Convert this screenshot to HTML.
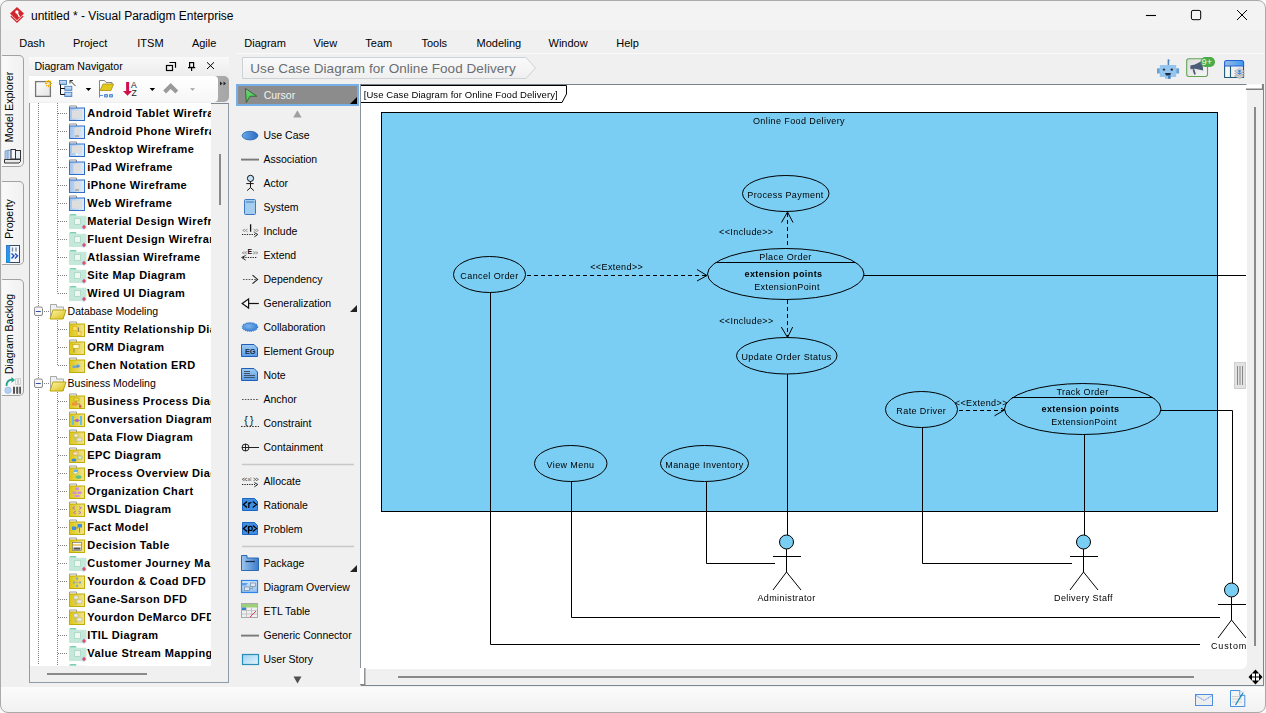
<!DOCTYPE html><html><head><meta charset="utf-8"><title>VP</title><style>
*{box-sizing:border-box}
html,body{margin:0;padding:0}
body{width:1266px;height:713px;overflow:hidden;position:relative;background:#f0f0f0;font-family:"Liberation Sans", sans-serif;color:#000}
.a{position:absolute}
.t{position:absolute;white-space:pre;line-height:1}
svg{position:absolute;overflow:visible}
</style></head><body><div class="a" style="left:0;top:0;width:1266px;height:30px;background:#f3f3f3"></div><svg style="left:0;top:0" width="40" height="30"><path d="M17 6.9 L24 13.6 L17 20.3 L10 13.6 Z" fill="#d3262c"/><path d="M10.4 16.6 L17 23 L23.6 16.6 L22.6 15.6 L17 21 L11.4 15.6 Z" fill="#d3262c"/><path d="M11 15.2 L17 21 L23 15.2" fill="none" stroke="#f6d0d0" stroke-width="0.6" stroke-dasharray="1 0.8"/><circle cx="16.9" cy="12" r="1.7" fill="#fff"/><path d="M17.2 12.8 L19.4 17" stroke="#fff" stroke-width="1.4"/></svg><div class="t" style="left:31.00px;top:10.04px;font-size:12px;color:#000;font-weight:normal;letter-spacing:0px;">untitled * - Visual Paradigm Enterprise</div><svg style="left:1130px;top:0" width="136" height="30"><path d="M15.9 15.5 H26" stroke="#000" stroke-width="1.1"/><rect x="61.4" y="10.4" width="9.3" height="9.3" rx="1.6" fill="none" stroke="#000" stroke-width="1"/><path d="M107 10 L117 20 M117 10 L107 20" stroke="#000" stroke-width="1"/></svg><div class="t" style="left:19.20px;top:38.49px;font-size:11px;color:#000;font-weight:normal;letter-spacing:0px;">Dash</div><div class="t" style="left:73.00px;top:38.49px;font-size:11px;color:#000;font-weight:normal;letter-spacing:0px;">Project</div><div class="t" style="left:137.30px;top:38.49px;font-size:11px;color:#000;font-weight:normal;letter-spacing:0px;">ITSM</div><div class="t" style="left:191.90px;top:38.49px;font-size:11px;color:#000;font-weight:normal;letter-spacing:0px;">Agile</div><div class="t" style="left:244.30px;top:38.49px;font-size:11px;color:#000;font-weight:normal;letter-spacing:0px;">Diagram</div><div class="t" style="left:313.50px;top:38.49px;font-size:11px;color:#000;font-weight:normal;letter-spacing:0px;">View</div><div class="t" style="left:365.30px;top:38.49px;font-size:11px;color:#000;font-weight:normal;letter-spacing:0px;">Team</div><div class="t" style="left:421.40px;top:38.49px;font-size:11px;color:#000;font-weight:normal;letter-spacing:0px;">Tools</div><div class="t" style="left:476.50px;top:38.49px;font-size:11px;color:#000;font-weight:normal;letter-spacing:0px;">Modeling</div><div class="t" style="left:548.50px;top:38.49px;font-size:11px;color:#000;font-weight:normal;letter-spacing:0px;">Window</div><div class="t" style="left:616.30px;top:38.49px;font-size:11px;color:#000;font-weight:normal;letter-spacing:0px;">Help</div><div class="a" style="left:2px;top:55px;width:22px;height:112px;border:1px solid #a2a2a2;border-left:none;border-radius:0 5px 5px 0;background:linear-gradient(90deg,#f9f9f9,#f1f1f1)"></div><div class="t" style="left:9.1px;top:107.0px;font-size:10.5px;transform:translate(-50%,-50%) rotate(-90deg);color:#000">Model Explorer</div><div class="a" style="left:2px;top:181px;width:22px;height:84px;border:1px solid #a2a2a2;border-left:none;border-radius:0 5px 5px 0;background:linear-gradient(90deg,#f9f9f9,#f1f1f1)"></div><div class="t" style="left:9.1px;top:218.5px;font-size:10.5px;transform:translate(-50%,-50%) rotate(-90deg);color:#000">Property</div><div class="a" style="left:2px;top:279px;width:22px;height:117px;border:1px solid #a2a2a2;border-left:none;border-radius:0 5px 5px 0;background:linear-gradient(90deg,#f9f9f9,#f1f1f1)"></div><div class="t" style="left:9.1px;top:333.5px;font-size:10.5px;transform:translate(-50%,-50%) rotate(-90deg);color:#000">Diagram Backlog</div><svg style="left:0;top:0" width="28" height="400"><defs><linearGradient id="pb" x1="0" y1="0" x2="0" y2="1"><stop offset="0" stop-color="#3a8ae6"/><stop offset="1" stop-color="#18a0f8"/></linearGradient></defs><path d="M5 151 l4 -1 v9 l-4 1z" fill="#a8c8ee" stroke="#6a8ab8" stroke-width="0.7"/><path d="M8 150.5 l3.5 -0.5 v9.5 h-3.5z" fill="#c8dcf4" stroke="#6a8ab8" stroke-width="0.7"/><rect x="11" y="149.5" width="4.5" height="9.5" fill="#f4f8fc" stroke="#333" stroke-width="1"/><rect x="15.5" y="150.5" width="5" height="8.5" fill="#e6eef6" stroke="#333" stroke-width="1"/><path d="M4.5 159.5 h16 v2 l-1.5 1.5 h-14.5z" fill="#e8e8e8" stroke="#333" stroke-width="1"/><rect x="6.5" y="245.5" width="13" height="17" fill="#f4f7fb" stroke="#3a4a66" stroke-width="1"/><rect x="6.2" y="245.2" width="4" height="17.6" rx="1" fill="url(#pb)"/><path d="M12.5 247.5 v4 M16 247.5 v4" stroke="#7a8aa0" stroke-width="1.4"/><path d="M11.5 253.5 l2.5 2.2 -2.5 2.8 M15 253.5 l2.5 2.2 -2.5 2.8" stroke="#1c50c8" stroke-width="1.4" fill="none"/><path d="M6.5 386 q0 -6 5.5 -6.5" stroke="#24a48c" stroke-width="1.8" fill="none"/><path d="M11.5 377 l3.5 3 -3.5 2.8z" fill="#24a48c"/><circle cx="8" cy="390.3" r="3.2" fill="#b4d0f0" stroke="#8ab0e0" stroke-width="0.6"/><path d="M13 386.8 h2 v7 h-2z M16.2 386.8 h2 v7 h-2z M19.2 386.8 h1.8 v7 h-1.8z" fill="#555"/><path d="M15.5 378.5 h2 v6 h-2z M18.5 378.5 h2 v6 h-2z" fill="none" stroke="#c8c8c8" stroke-width="0.8"/></svg><div class="a" style="left:29px;top:57px;width:200px;height:19px;background:linear-gradient(#f9f9f9,#ececec)"></div><div class="t" style="left:34.40px;top:61.03px;font-size:10.6px;color:#000;font-weight:normal;letter-spacing:0px;">Diagram Navigator</div><svg style="left:160px;top:56px" width="70" height="20"><rect x="6.5" y="9.5" width="6" height="5" fill="none" stroke="#000" stroke-width="1.2"/><path d="M9.5 6.5 H15.5 V11.8" fill="none" stroke="#000" stroke-width="1.2"/><rect x="29.6" y="6.6" width="4" height="4.8" fill="none" stroke="#000" stroke-width="1.2"/><path d="M28 11.6 H35.2 M31.6 11.6 V15" fill="none" stroke="#000" stroke-width="1.2"/><path d="M47 6.3 L54 13 M54 6.3 L47 13" stroke="#000" stroke-width="1"/></svg><div class="a" style="left:205px;top:76px;width:24px;height:26px;background:linear-gradient(90deg,#b0b0b0,#a6a6a6);border-radius:0 5px 5px 0"></div><div class="a" style="left:29px;top:76px;width:189px;height:26px;background:linear-gradient(#ffffff,#f6f6f6);border-radius:0 4px 4px 0"></div><svg style="left:0;top:0" width="232" height="110"><defs><linearGradient id="tbw" x1="0" y1="0" x2="1" y2="1"><stop offset="0" stop-color="#fff"/><stop offset="1" stop-color="#e2e2e2"/></linearGradient><linearGradient id="tbb" x1="0" y1="0" x2="0" y2="1"><stop offset="0" stop-color="#d8e8f8"/><stop offset="1" stop-color="#8dbbe8"/></linearGradient></defs><rect x="35.6" y="81.6" width="14.8" height="14.8" fill="url(#tbw)" stroke="#777" stroke-width="1.3"/><path d="M48.5 80 v2.2 M48.5 84.8 v2.4 M45 83.5 h2.2 M49.8 83.5 h2.4 M46 81 l1.2 1.2 M51 81 l-1.2 1.2 M46 86 l1.2 -1.2 M51 86 l-1.2 -1.2" stroke="#f0b400" stroke-width="1.2"/><rect x="59.5" y="80.5" width="7" height="4" fill="url(#tbb)" stroke="#4a7fc0" stroke-width="0.9"/><rect x="64.8" y="86.3" width="7" height="4" fill="url(#tbb)" stroke="#4a7fc0" stroke-width="0.9"/><rect x="64.8" y="92.3" width="7" height="4.2" fill="url(#tbb)" stroke="#4a7fc0" stroke-width="0.9"/><path d="M60.5 84.5 v10 h4.3 M60.5 88.5 h4.3" stroke="#111" stroke-width="1" fill="none"/><path d="M70 80.5 l5.5 5.5 M70 80.5 h3 M70 80.5 v3" stroke="#222" stroke-width="0.9" fill="none"/><path d="M85.7 88 h5.5 l-2.75 3z" fill="#000"/><path d="M99.5 97.5 V80.5 h5 l1.5 2 h6 v3" fill="none" stroke="#777" stroke-width="0.9"/><path d="M103 84 h10.5 l-2.5 6.5 h-11z" fill="#e0c81c" stroke="#a89010" stroke-width="0.8"/><path d="M100 95.5 h3 M104.5 94.5 h3 v2.5 h-3z M109.5 94.5 h3 v2.5 h-3z" stroke="#4a86d0" stroke-width="0.9" fill="#8fbbe6"/><path d="M127.6 82 v9.5" stroke="#d00e4e" stroke-width="3"/><path d="M123 91 h9 l-4.5 4.7z" fill="#d00e4e"/><text x="131" y="88" font-size="8.6" font-family="Liberation Sans" fill="#222">A</text><text x="131.6" y="95.7" font-size="8.6" font-family="Liberation Sans" fill="#222">Z</text><path d="M149.6 88 h5.5 l-2.75 3z" fill="#000"/><path d="M163.2 90.6 L170.7 83.1 L178.2 90.6 L175.4 93.6 L170.7 88.9 L166 93.6 Z" fill="#9a9a9a"/><path d="M190 88.3 h5 l-2.5 2.4z" fill="#a0a0a0"/><path d="M220 81.5 l2.5 2 -2.5 2z M223.5 81.5 l2.5 2 -2.5 2z" fill="#222"/></svg><div class="a" style="left:29px;top:102.6px;width:200px;height:580.4px;border:1px solid #8f9aa6;border-top:1px solid #7f8790;background:#f0f0f0"></div><div class="a" style="left:30px;top:103px;width:181px;height:563px;background:#fff;overflow:hidden" id="tree"><svg style="left:0;top:0" width="181" height="563"><defs><linearGradient id="fb" x1="0" y1="0" x2="1" y2="0"><stop offset="0" stop-color="#a2c4ee"/><stop offset="1" stop-color="#e4eefa"/></linearGradient><linearGradient id="fy" x1="0" y1="0" x2="1" y2="1"><stop offset="0" stop-color="#fff5b0"/><stop offset="1" stop-color="#d8c010"/></linearGradient><linearGradient id="fyb" x1="0" y1="0" x2="1" y2="0"><stop offset="0" stop-color="#dcc60e"/><stop offset="1" stop-color="#f0e494"/></linearGradient></defs><path d="M8.5 0 V562" stroke="#808080" stroke-width="1" stroke-dasharray="1 1"/><path d="M27.5 0 V190.5" stroke="#808080" stroke-width="1" stroke-dasharray="1 1"/><path d="M27.5 217 V262.5" stroke="#808080" stroke-width="1" stroke-dasharray="1 1"/><path d="M27.5 289 V562" stroke="#808080" stroke-width="1" stroke-dasharray="1 1"/><path d="M28 10.5 H37" stroke="#808080" stroke-width="1" stroke-dasharray="1 1"/><path d="M39.5 5.0 v-2 h7 v2" fill="none" stroke="#8a8a8a" stroke-width="1"/><rect x="39.5" y="5.0" width="15" height="12.5" fill="url(#fb)" stroke="#2f6fc4" stroke-width="1"/><rect x="42" y="7.5" width="10" height="8" fill="#dedede"/><path d="M28 28.5 H37" stroke="#808080" stroke-width="1" stroke-dasharray="1 1"/><path d="M39.5 23.0 v-2 h7 v2" fill="none" stroke="#8a8a8a" stroke-width="1"/><rect x="39.5" y="23.0" width="15" height="12.5" fill="url(#fb)" stroke="#2f6fc4" stroke-width="1"/><rect x="44.5" y="25.0" width="5" height="9" fill="#dedede"/><path d="M45 33.0 h4" stroke="#777" stroke-width="0.8"/><path d="M28 46.5 H37" stroke="#808080" stroke-width="1" stroke-dasharray="1 1"/><path d="M39.5 41.0 v-2 h7 v2" fill="none" stroke="#8a8a8a" stroke-width="1"/><rect x="39.5" y="41.0" width="15" height="12.5" fill="url(#fb)" stroke="#2f6fc4" stroke-width="1"/><rect x="42" y="43.0" width="10" height="7" fill="#dedede"/><rect x="46" y="50.5" width="2" height="1.5" fill="#fff"/><path d="M28 64.5 H37" stroke="#808080" stroke-width="1" stroke-dasharray="1 1"/><path d="M39.5 59.0 v-2 h7 v2" fill="none" stroke="#8a8a8a" stroke-width="1"/><rect x="39.5" y="59.0" width="15" height="12.5" fill="url(#fb)" stroke="#2f6fc4" stroke-width="1"/><rect x="43.5" y="61.0" width="7" height="9" fill="#dedede"/><path d="M28 82.5 H37" stroke="#808080" stroke-width="1" stroke-dasharray="1 1"/><path d="M39.5 77.0 v-2 h7 v2" fill="none" stroke="#8a8a8a" stroke-width="1"/><rect x="39.5" y="77.0" width="15" height="12.5" fill="url(#fb)" stroke="#2f6fc4" stroke-width="1"/><rect x="44.5" y="79.0" width="5" height="9" fill="#dedede"/><path d="M45 87.0 h4" stroke="#777" stroke-width="0.8"/><path d="M28 100.5 H37" stroke="#808080" stroke-width="1" stroke-dasharray="1 1"/><path d="M39.5 95.0 v-2 h7 v2" fill="none" stroke="#8a8a8a" stroke-width="1"/><rect x="39.5" y="95.0" width="15" height="12.5" fill="url(#fb)" stroke="#2f6fc4" stroke-width="1"/><rect x="42" y="97.5" width="10" height="8" fill="#dedede"/><path d="M28 118.5 H37" stroke="#808080" stroke-width="1" stroke-dasharray="1 1"/><path d="M39 112.5 q0 -1.2 1.2 -1.2 h5.5 l1 1.5 h9 q0.8 0 0.8 0.8 v11.4 q0 1 -1 1 h-15.5 q-1 0 -1 -1z" fill="#c4e9da"/><path d="M39.8 112.3 q0 -1 1 -1 h5 l0.8 1z" fill="#5cc49c"/><rect x="44.5" y="115.5" width="6" height="6" fill="#eef7f3" stroke="#a9d6c3" stroke-width="0.8"/><circle cx="53.5" cy="124.0" r="2.6" fill="#bfe0f2"/><path d="M54 121.8 l2 2.2 -2 2.2 -2 -2.2z" fill="#e0506a"/><path d="M28 136.5 H37" stroke="#808080" stroke-width="1" stroke-dasharray="1 1"/><path d="M39 130.5 q0 -1.2 1.2 -1.2 h5.5 l1 1.5 h9 q0.8 0 0.8 0.8 v11.4 q0 1 -1 1 h-15.5 q-1 0 -1 -1z" fill="#c4e9da"/><path d="M39.8 130.3 q0 -1 1 -1 h5 l0.8 1z" fill="#5cc49c"/><rect x="44.5" y="133.5" width="6" height="6" fill="#eef7f3" stroke="#a9d6c3" stroke-width="0.8"/><circle cx="53.5" cy="142.0" r="2.6" fill="#bfe0f2"/><path d="M54 139.8 l2 2.2 -2 2.2 -2 -2.2z" fill="#e0506a"/><path d="M28 154.5 H37" stroke="#808080" stroke-width="1" stroke-dasharray="1 1"/><path d="M39 148.5 q0 -1.2 1.2 -1.2 h5.5 l1 1.5 h9 q0.8 0 0.8 0.8 v11.4 q0 1 -1 1 h-15.5 q-1 0 -1 -1z" fill="#c4e9da"/><path d="M39.8 148.3 q0 -1 1 -1 h5 l0.8 1z" fill="#5cc49c"/><rect x="44.5" y="151.5" width="6" height="6" fill="#eef7f3" stroke="#a9d6c3" stroke-width="0.8"/><circle cx="53.5" cy="160.0" r="2.6" fill="#bfe0f2"/><path d="M54 157.8 l2 2.2 -2 2.2 -2 -2.2z" fill="#e0506a"/><path d="M28 172.5 H37" stroke="#808080" stroke-width="1" stroke-dasharray="1 1"/><path d="M39 166.5 q0 -1.2 1.2 -1.2 h5.5 l1 1.5 h9 q0.8 0 0.8 0.8 v11.4 q0 1 -1 1 h-15.5 q-1 0 -1 -1z" fill="#c4e9da"/><path d="M39.8 166.3 q0 -1 1 -1 h5 l0.8 1z" fill="#5cc49c"/><rect x="44.5" y="169.5" width="6" height="6" fill="#eef7f3" stroke="#a9d6c3" stroke-width="0.8"/><circle cx="53.5" cy="178.0" r="2.6" fill="#bfe0f2"/><path d="M54 175.8 l2 2.2 -2 2.2 -2 -2.2z" fill="#e0506a"/><path d="M28 190.5 H37" stroke="#808080" stroke-width="1" stroke-dasharray="1 1"/><path d="M39 184.5 q0 -1.2 1.2 -1.2 h5.5 l1 1.5 h9 q0.8 0 0.8 0.8 v11.4 q0 1 -1 1 h-15.5 q-1 0 -1 -1z" fill="#c4e9da"/><path d="M39.8 184.3 q0 -1 1 -1 h5 l0.8 1z" fill="#5cc49c"/><rect x="44.5" y="187.5" width="6" height="6" fill="#eef7f3" stroke="#a9d6c3" stroke-width="0.8"/><circle cx="53.5" cy="196.0" r="2.6" fill="#bfe0f2"/><path d="M54 193.8 l2 2.2 -2 2.2 -2 -2.2z" fill="#e0506a"/><rect x="4.5" y="204.0" width="8" height="8.5" rx="1.5" fill="#f6f6f6" stroke="#8a8a8a" stroke-width="1"/><path d="M5.799999999999997 208.5 h5" stroke="#3050a8" stroke-width="1"/><path d="M14 208.5 H19" stroke="#808080" stroke-width="1" stroke-dasharray="1 1"/><path d="M20.5 216.0 V201.5 h6 v2.5 h7 v12" fill="#eef0f4" stroke="#a8a8a8" stroke-width="1"/><path d="M23 207.0 h13 l-3 9 h-13z" fill="url(#fy)" stroke="#b8a410" stroke-width="1"/><path d="M28 226.5 H37" stroke="#808080" stroke-width="1" stroke-dasharray="1 1"/><path d="M39.5 221.0 v-2 h7 v2" fill="none" stroke="#9a9a9a" stroke-width="1"/><rect x="39.5" y="221.0" width="15" height="12.5" fill="url(#fyb)" stroke="#c2ac08" stroke-width="1"/><g transform="translate(39,226.5)"><rect x="4" y="-3" width="4" height="4" fill="#fbe27a" stroke="#e0a000" stroke-width="0.5"/><rect x="8" y="2" width="4" height="4" fill="#fbe27a" stroke="#e0a000" stroke-width="0.5"/><path d="M9.5 -2 v4" stroke="#555" stroke-width="0.7"/></g><path d="M28 244.5 H37" stroke="#808080" stroke-width="1" stroke-dasharray="1 1"/><path d="M39.5 239.0 v-2 h7 v2" fill="none" stroke="#9a9a9a" stroke-width="1"/><rect x="39.5" y="239.0" width="15" height="12.5" fill="url(#fyb)" stroke="#c2ac08" stroke-width="1"/><g transform="translate(39,244.5)"><rect x="4" y="-3" width="6" height="4" fill="#fff8d0" stroke="#c0a000" stroke-width="0.6"/><path d="M5 1 v4" stroke="#777" stroke-width="0.8"/></g><path d="M28 262.5 H37" stroke="#808080" stroke-width="1" stroke-dasharray="1 1"/><path d="M39.5 257.0 v-2 h7 v2" fill="none" stroke="#9a9a9a" stroke-width="1"/><rect x="39.5" y="257.0" width="15" height="12.5" fill="url(#fyb)" stroke="#c2ac08" stroke-width="1"/><g transform="translate(39,262.5)"><rect x="3.5" y="0" width="4" height="2.5" fill="#6aa8e8"/><path d="M9 -1.5 l2.5 2 -2.5 2 -2.5 -2z" fill="#6aa8e8"/><path d="M7.5 1.2 h2" stroke="#555" stroke-width="0.6"/></g><rect x="4.5" y="276.0" width="8" height="8.5" rx="1.5" fill="#f6f6f6" stroke="#8a8a8a" stroke-width="1"/><path d="M5.799999999999997 280.5 h5" stroke="#3050a8" stroke-width="1"/><path d="M14 280.5 H19" stroke="#808080" stroke-width="1" stroke-dasharray="1 1"/><path d="M20.5 288.0 V273.5 h6 v2.5 h7 v12" fill="#eef0f4" stroke="#a8a8a8" stroke-width="1"/><path d="M23 279.0 h13 l-3 9 h-13z" fill="url(#fy)" stroke="#b8a410" stroke-width="1"/><path d="M28 298.5 H37" stroke="#808080" stroke-width="1" stroke-dasharray="1 1"/><path d="M39.5 293.0 v-2 h7 v2" fill="none" stroke="#9a9a9a" stroke-width="1"/><rect x="39.5" y="293.0" width="15" height="12.5" fill="url(#fyb)" stroke="#c2ac08" stroke-width="1"/><g transform="translate(39,298.5)"><rect x="5" y="-3.5" width="5" height="3" fill="#f0e040" stroke="#b09000" stroke-width="0.5"/><rect x="3" y="1" width="5" height="3" fill="#f09040"/><rect x="10" y="4" width="2.5" height="2" fill="#e04040"/><path d="M7 -0.5 v1.5 M8 2.5 h3 v1.5" stroke="#666" stroke-width="0.6" fill="none"/></g><path d="M28 316.5 H37" stroke="#808080" stroke-width="1" stroke-dasharray="1 1"/><path d="M39.5 311.0 v-2 h7 v2" fill="none" stroke="#9a9a9a" stroke-width="1"/><rect x="39.5" y="311.0" width="15" height="12.5" fill="url(#fyb)" stroke="#c2ac08" stroke-width="1"/><g transform="translate(39,316.5)"><rect x="3" y="-3.5" width="2" height="9" fill="#60c0e8"/><rect x="11" y="-3.5" width="2" height="9" fill="#60c0e8"/><path d="M5 1 h6" stroke="#666" stroke-width="0.6"/><circle cx="8" cy="1" r="1.8" fill="#b060e0"/></g><path d="M28 334.5 H37" stroke="#808080" stroke-width="1" stroke-dasharray="1 1"/><path d="M39.5 329.0 v-2 h7 v2" fill="none" stroke="#9a9a9a" stroke-width="1"/><rect x="39.5" y="329.0" width="15" height="12.5" fill="url(#fyb)" stroke="#c2ac08" stroke-width="1"/><g transform="translate(39,334.5)"><rect x="5" y="-3.5" width="4" height="3" fill="#f4f0d0" stroke="#b0a070" stroke-width="0.5"/><rect x="8" y="0.5" width="5" height="3" fill="#e8e8e8" stroke="#aaa" stroke-width="0.5"/><path d="M6 -0.5 v5 h2" stroke="#aaa" stroke-width="0.6" fill="none"/></g><path d="M28 352.5 H37" stroke="#808080" stroke-width="1" stroke-dasharray="1 1"/><path d="M39.5 347.0 v-2 h7 v2" fill="none" stroke="#9a9a9a" stroke-width="1"/><rect x="39.5" y="347.0" width="15" height="12.5" fill="url(#fyb)" stroke="#c2ac08" stroke-width="1"/><g transform="translate(39,352.5)"><rect x="4" y="-3.5" width="5" height="3" fill="#f8e0c0" stroke="#c09060" stroke-width="0.5"/><rect x="9" y="0.5" width="4" height="3" fill="#e0f0d0" stroke="#80a060" stroke-width="0.5"/><ellipse cx="5" cy="4.5" rx="2.5" ry="1.6" fill="#3a86e0"/></g><path d="M28 370.5 H37" stroke="#808080" stroke-width="1" stroke-dasharray="1 1"/><path d="M39.5 365.0 v-2 h7 v2" fill="none" stroke="#9a9a9a" stroke-width="1"/><rect x="39.5" y="365.0" width="15" height="12.5" fill="url(#fyb)" stroke="#c2ac08" stroke-width="1"/><g transform="translate(39,370.5)"><path d="M3.5 -1 l3 -2 3 2 -3 2z" fill="#e8f0d0" stroke="#90a060" stroke-width="0.5"/><rect x="5" y="-4" width="4" height="2.5" fill="#6ab0f0"/><ellipse cx="9.5" cy="3.5" rx="3" ry="1.8" fill="#60c080"/></g><path d="M28 388.5 H37" stroke="#808080" stroke-width="1" stroke-dasharray="1 1"/><path d="M39.5 383.0 v-2 h7 v2" fill="none" stroke="#9a9a9a" stroke-width="1"/><rect x="39.5" y="383.0" width="15" height="12.5" fill="url(#fyb)" stroke="#c2ac08" stroke-width="1"/><g transform="translate(39,388.5)"><rect x="6" y="-4" width="4" height="2.5" fill="#d090e0"/><rect x="3.5" y="0" width="4" height="2.5" fill="#d090e0"/><rect x="8.5" y="0" width="4" height="2.5" fill="#d090e0"/><rect x="5.5" y="3.5" width="5" height="2" fill="#d090e0"/></g><path d="M28 406.5 H37" stroke="#808080" stroke-width="1" stroke-dasharray="1 1"/><path d="M39.5 401.0 v-2 h7 v2" fill="none" stroke="#9a9a9a" stroke-width="1"/><rect x="39.5" y="401.0" width="15" height="12.5" fill="url(#fyb)" stroke="#c2ac08" stroke-width="1"/><g transform="translate(39,406.5)"><path d="M6 -3 l-2.5 1.5 2.5 1.5 M10 -3 l2.5 1.5 -2.5 1.5 M7 1.5 l-2.5 1.5 2.5 1.5 M9.5 1.5 l2.5 1.5 -2.5 1.5" stroke="#b070d0" stroke-width="0.9" fill="none"/></g><path d="M28 424.5 H37" stroke="#808080" stroke-width="1" stroke-dasharray="1 1"/><path d="M39.5 419.0 v-2 h7 v2" fill="none" stroke="#9a9a9a" stroke-width="1"/><rect x="39.5" y="419.0" width="15" height="12.5" fill="url(#fyb)" stroke="#c2ac08" stroke-width="1"/><g transform="translate(39,424.5)"><rect x="3" y="-1" width="4" height="3.5" fill="#3a90e0"/><rect x="8.5" y="-3.5" width="4.5" height="3.5" fill="#3a90e0"/><path d="M7 0.5 h2 M10.5 0 v5" stroke="#555" stroke-width="0.6"/></g><path d="M28 442.5 H37" stroke="#808080" stroke-width="1" stroke-dasharray="1 1"/><path d="M39.5 437.0 v-2 h7 v2" fill="none" stroke="#9a9a9a" stroke-width="1"/><rect x="39.5" y="437.0" width="15" height="12.5" fill="url(#fyb)" stroke="#c2ac08" stroke-width="1"/><g transform="translate(39,442.5)"><rect x="3.5" y="-3" width="9" height="8" fill="#fff" stroke="#666" stroke-width="0.6"/><path d="M3.5 -0.5 h9" stroke="#e0a000" stroke-width="1"/><rect x="4.5" y="2" width="7" height="2.2" fill="#555"/></g><path d="M28 460.5 H37" stroke="#808080" stroke-width="1" stroke-dasharray="1 1"/><path d="M39 454.5 q0 -1.2 1.2 -1.2 h5.5 l1 1.5 h9 q0.8 0 0.8 0.8 v11.4 q0 1 -1 1 h-15.5 q-1 0 -1 -1z" fill="#c4e9da"/><path d="M39.8 454.3 q0 -1 1 -1 h5 l0.8 1z" fill="#5cc49c"/><rect x="44.5" y="457.5" width="6" height="6" fill="#eef7f3" stroke="#a9d6c3" stroke-width="0.8"/><circle cx="53.5" cy="466.0" r="2.6" fill="#bfe0f2"/><path d="M54 463.8 l2 2.2 -2 2.2 -2 -2.2z" fill="#e0506a"/><path d="M28 478.5 H37" stroke="#808080" stroke-width="1" stroke-dasharray="1 1"/><path d="M39.5 473.0 v-2 h7 v2" fill="none" stroke="#9a9a9a" stroke-width="1"/><rect x="39.5" y="473.0" width="15" height="12.5" fill="url(#fyb)" stroke="#c2ac08" stroke-width="1"/><g transform="translate(39,478.5)"><circle cx="8" cy="-3" r="1" fill="#60a0e0"/><circle cx="5" cy="1" r="1" fill="#60a0e0"/><circle cx="11" cy="1" r="1" fill="#60a0e0"/><circle cx="8" cy="4.5" r="1" fill="#60a0e0"/><path d="M8 -2 v5.5 M5 1 h6" stroke="#aaa" stroke-width="0.5"/></g><path d="M28 496.5 H37" stroke="#808080" stroke-width="1" stroke-dasharray="1 1"/><path d="M39.5 491.0 v-2 h7 v2" fill="none" stroke="#9a9a9a" stroke-width="1"/><rect x="39.5" y="491.0" width="15" height="12.5" fill="url(#fyb)" stroke="#c2ac08" stroke-width="1"/><g transform="translate(39,496.5)"><rect x="5" y="-3.5" width="4" height="3" fill="#f0f0f0" stroke="#aaa" stroke-width="0.5"/><rect x="8" y="0.5" width="5" height="3" fill="#f0f0f0" stroke="#aaa" stroke-width="0.5"/><path d="M6 -0.5 v5 h2" stroke="#aaa" stroke-width="0.6" fill="none"/></g><path d="M28 514.5 H37" stroke="#808080" stroke-width="1" stroke-dasharray="1 1"/><path d="M39.5 509.0 v-2 h7 v2" fill="none" stroke="#9a9a9a" stroke-width="1"/><rect x="39.5" y="509.0" width="15" height="12.5" fill="url(#fyb)" stroke="#c2ac08" stroke-width="1"/><g transform="translate(39,514.5)"><rect x="5" y="-3.5" width="4" height="3" fill="#f0f0f0" stroke="#aaa" stroke-width="0.5"/><rect x="8" y="0.5" width="5" height="3" fill="#f0f0f0" stroke="#aaa" stroke-width="0.5"/><path d="M6 -0.5 v5 h2" stroke="#aaa" stroke-width="0.6" fill="none"/></g><path d="M28 532.5 H37" stroke="#808080" stroke-width="1" stroke-dasharray="1 1"/><path d="M39 526.5 q0 -1.2 1.2 -1.2 h5.5 l1 1.5 h9 q0.8 0 0.8 0.8 v11.4 q0 1 -1 1 h-15.5 q-1 0 -1 -1z" fill="#c4e9da"/><path d="M39.8 526.3 q0 -1 1 -1 h5 l0.8 1z" fill="#5cc49c"/><rect x="44.5" y="529.5" width="6" height="6" fill="#eef7f3" stroke="#a9d6c3" stroke-width="0.8"/><circle cx="53.5" cy="538.0" r="2.6" fill="#bfe0f2"/><path d="M54 535.8 l2 2.2 -2 2.2 -2 -2.2z" fill="#e0506a"/><path d="M28 550.5 H37" stroke="#808080" stroke-width="1" stroke-dasharray="1 1"/><path d="M39 544.5 q0 -1.2 1.2 -1.2 h5.5 l1 1.5 h9 q0.8 0 0.8 0.8 v11.4 q0 1 -1 1 h-15.5 q-1 0 -1 -1z" fill="#c4e9da"/><path d="M39.8 544.3 q0 -1 1 -1 h5 l0.8 1z" fill="#5cc49c"/><rect x="44.5" y="547.5" width="6" height="6" fill="#eef7f3" stroke="#a9d6c3" stroke-width="0.8"/><circle cx="53.5" cy="556.0" r="2.6" fill="#bfe0f2"/><path d="M54 553.8 l2 2.2 -2 2.2 -2 -2.2z" fill="#e0506a"/><path d="M28 568.5 H37" stroke="#808080" stroke-width="1" stroke-dasharray="1 1"/><path d="M39 562.5 q0 -1.2 1.2 -1.2 h5.5 l1 1.5 h9 q0.8 0 0.8 0.8 v11.4 q0 1 -1 1 h-15.5 q-1 0 -1 -1z" fill="#c4e9da"/><path d="M39.8 562.3 q0 -1 1 -1 h5 l0.8 1z" fill="#5cc49c"/><rect x="44.5" y="565.5" width="6" height="6" fill="#eef7f3" stroke="#a9d6c3" stroke-width="0.8"/><circle cx="53.5" cy="574.0" r="2.6" fill="#bfe0f2"/><path d="M54 571.8 l2 2.2 -2 2.2 -2 -2.2z" fill="#e0506a"/></svg><div class="t" style="left:57.30px;top:4.59px;font-size:11px;color:#000;font-weight:bold;letter-spacing:0.4px;">Android Tablet Wireframe</div><div class="t" style="left:57.30px;top:22.59px;font-size:11px;color:#000;font-weight:bold;letter-spacing:0.4px;">Android Phone Wireframe</div><div class="t" style="left:57.30px;top:40.59px;font-size:11px;color:#000;font-weight:bold;letter-spacing:0.4px;">Desktop Wireframe</div><div class="t" style="left:57.30px;top:58.59px;font-size:11px;color:#000;font-weight:bold;letter-spacing:0.4px;">iPad Wireframe</div><div class="t" style="left:57.30px;top:76.59px;font-size:11px;color:#000;font-weight:bold;letter-spacing:0.4px;">iPhone Wireframe</div><div class="t" style="left:57.30px;top:94.59px;font-size:11px;color:#000;font-weight:bold;letter-spacing:0.4px;">Web Wireframe</div><div class="t" style="left:57.30px;top:112.59px;font-size:11px;color:#000;font-weight:bold;letter-spacing:0.4px;">Material Design Wireframe</div><div class="t" style="left:57.30px;top:130.59px;font-size:11px;color:#000;font-weight:bold;letter-spacing:0.4px;">Fluent Design Wireframe</div><div class="t" style="left:57.30px;top:148.59px;font-size:11px;color:#000;font-weight:bold;letter-spacing:0.4px;">Atlassian Wireframe</div><div class="t" style="left:57.30px;top:166.59px;font-size:11px;color:#000;font-weight:bold;letter-spacing:0.4px;">Site Map Diagram</div><div class="t" style="left:57.30px;top:184.59px;font-size:11px;color:#000;font-weight:bold;letter-spacing:0.4px;">Wired UI Diagram</div><div class="t" style="left:37.60px;top:203.41px;font-size:10.5px;color:#000;font-weight:normal;letter-spacing:0px;">Database Modeling</div><div class="t" style="left:57.30px;top:220.59px;font-size:11px;color:#000;font-weight:bold;letter-spacing:0.4px;">Entity Relationship Diagram</div><div class="t" style="left:57.30px;top:238.59px;font-size:11px;color:#000;font-weight:bold;letter-spacing:0.4px;">ORM Diagram</div><div class="t" style="left:57.30px;top:256.59px;font-size:11px;color:#000;font-weight:bold;letter-spacing:0.4px;">Chen Notation ERD</div><div class="t" style="left:37.60px;top:275.41px;font-size:10.5px;color:#000;font-weight:normal;letter-spacing:0px;">Business Modeling</div><div class="t" style="left:57.30px;top:292.59px;font-size:11px;color:#000;font-weight:bold;letter-spacing:0.4px;">Business Process Diagram</div><div class="t" style="left:57.30px;top:310.59px;font-size:11px;color:#000;font-weight:bold;letter-spacing:0.4px;">Conversation Diagram</div><div class="t" style="left:57.30px;top:328.59px;font-size:11px;color:#000;font-weight:bold;letter-spacing:0.4px;">Data Flow Diagram</div><div class="t" style="left:57.30px;top:346.59px;font-size:11px;color:#000;font-weight:bold;letter-spacing:0.4px;">EPC Diagram</div><div class="t" style="left:57.30px;top:364.59px;font-size:11px;color:#000;font-weight:bold;letter-spacing:0.4px;">Process Overview Diagram</div><div class="t" style="left:57.30px;top:382.59px;font-size:11px;color:#000;font-weight:bold;letter-spacing:0.4px;">Organization Chart</div><div class="t" style="left:57.30px;top:400.59px;font-size:11px;color:#000;font-weight:bold;letter-spacing:0.4px;">WSDL Diagram</div><div class="t" style="left:57.30px;top:418.59px;font-size:11px;color:#000;font-weight:bold;letter-spacing:0.4px;">Fact Model</div><div class="t" style="left:57.30px;top:436.59px;font-size:11px;color:#000;font-weight:bold;letter-spacing:0.4px;">Decision Table</div><div class="t" style="left:57.30px;top:454.59px;font-size:11px;color:#000;font-weight:bold;letter-spacing:0.4px;">Customer Journey Mapping</div><div class="t" style="left:57.30px;top:472.59px;font-size:11px;color:#000;font-weight:bold;letter-spacing:0.4px;">Yourdon &amp; Coad DFD</div><div class="t" style="left:57.30px;top:490.59px;font-size:11px;color:#000;font-weight:bold;letter-spacing:0.4px;">Gane-Sarson DFD</div><div class="t" style="left:57.30px;top:508.59px;font-size:11px;color:#000;font-weight:bold;letter-spacing:0.4px;">Yourdon DeMarco DFD</div><div class="t" style="left:57.30px;top:526.59px;font-size:11px;color:#000;font-weight:bold;letter-spacing:0.4px;">ITIL Diagram</div><div class="t" style="left:57.30px;top:544.59px;font-size:11px;color:#000;font-weight:bold;letter-spacing:0.4px;">Value Stream Mapping</div><div class="t" style="left:57.30px;top:562.59px;font-size:11px;color:#000;font-weight:bold;letter-spacing:0.4px;">Value Stream X</div></div><div class="a" style="left:219px;top:154px;width:2px;height:51px;background:#8a8a8a"></div><div class="a" style="left:47px;top:673px;width:100px;height:2px;background:#8a8a8a"></div><div class="a" style="left:236px;top:53px;width:1028px;height:1px;background:#fafafa"></div><svg style="left:236px;top:54px" width="320" height="30"><defs><linearGradient id="bcg" x1="0" y1="0" x2="0" y2="1"><stop offset="0" stop-color="#fafafa"/><stop offset="1" stop-color="#efefef"/></linearGradient></defs><path d="M6.5 3.5 H290 L299.5 14 L290 24.5 H6.5 Z" fill="url(#bcg)" stroke="#cdd2d6" stroke-width="1"/></svg><div class="t" style="left:250.30px;top:62.37px;font-size:13.5px;color:#6a6e72;font-weight:normal;letter-spacing:0.05px;">Use Case Diagram for Online Food Delivery</div><svg style="left:1150px;top:50px" width="116" height="34"><rect x="9.8" y="15" width="16.4" height="12" fill="#93c5ee"/><rect x="7" y="18.3" width="2.8" height="5.2" fill="#6aa2d4"/><rect x="26.2" y="18.3" width="2.9" height="5.2" fill="#6aa2d4"/><path d="M18.4 15 v-5.5" stroke="#4a86c0" stroke-width="1.6"/><path d="M18.4 9.2 l1.6 1.6 -1.6 0.8z" fill="#4a86c0"/><circle cx="14" cy="19.6" r="1.2" fill="#2a3a4a"/><circle cx="21.8" cy="19.6" r="1.2" fill="#1a2a3a"/><path d="M15 23 h6 l-1 2.4 h-4z" fill="#1f2d3d"/><rect x="15" y="27" width="6" height="1.8" fill="#93c5ee"/><rect x="18" y="25" width="2.5" height="3.8" fill="#4a7fb8"/><defs><linearGradient id="mg" x1="0" y1="0" x2="1" y2="1"><stop offset="0" stop-color="#dedede"/><stop offset="1" stop-color="#f6f6f6"/></linearGradient></defs><rect x="36.7" y="8.7" width="20.8" height="17.8" rx="2.2" fill="url(#mg)" stroke="#62a452" stroke-width="1.1"/><path d="M40.3 15.6 L45 14.6 L52.2 10.8 L53.2 20.6 L45 18.8 L40.5 19.2 Z" fill="#4c5d78"/><path d="M43.4 19.2 L45 24.6" stroke="#4c5d78" stroke-width="1.8"/><rect x="50.5" y="7.1" width="14.5" height="9.9" rx="4.9" fill="#4caa48"/><text x="51.6" y="15.4" font-size="9.2" font-family="Liberation Sans" fill="#f4f8d8">9+</text><defs><linearGradient id="lh" x1="0" y1="0" x2="1" y2="0"><stop offset="0" stop-color="#9abbe0"/><stop offset="1" stop-color="#3a98f0"/></linearGradient><linearGradient id="lb" x1="0" y1="0" x2="1" y2="0"><stop offset="0" stop-color="#fafafa"/><stop offset="1" stop-color="#e4e4e4"/></linearGradient></defs><path d="M74.6 15.5 V27.5 H93.5 V15.5" fill="url(#lb)" stroke="#1e5a78" stroke-width="1.1"/><path d="M74.6 16 V12.5 q0 -2 2 -2 h15 q2 0 2 2 V16 Z" fill="url(#lh)" stroke="#2462dc" stroke-width="1.1"/><path d="M80.5 16 v11.5" stroke="#1e5a78" stroke-width="1.1"/><path d="M84.5 26 l5 -2.6 5 2.6 -5 2.6z" fill="#d0d0d0" stroke="#a0a0a0" stroke-width="0.6"/><path d="M84.5 23.5 l5 -2.6 5 2.6 -5 2.6z" fill="#d8d8d8" stroke="#a0a0a0" stroke-width="0.6"/><path d="M84.5 21 l5 -2.6 5 2.6 -5 2.6z" fill="#dcdcdc" stroke="#a0a0a0" stroke-width="0.6"/><path d="M87.2 21 l2.3 -1.2 2.3 1.2 -2.3 1.2z M87.2 23.5 l2.3 -1.2 2.3 1.2 -2.3 1.2z" fill="#3a86e0"/></svg><div class="a" style="left:229px;top:79px;width:131px;height:607px;background:#f0f0f0"></div><div class="a" style="left:236px;top:84px;width:123px;height:22px;background:#8c8c8c;border:2px solid #76aee6"></div><svg style="left:236px;top:84px" width="124" height="22"><defs><linearGradient id="cg" x1="0" y1="0" x2="0.3" y2="1"><stop offset="0" stop-color="#8fc08f"/><stop offset="1" stop-color="#22e03a"/></linearGradient></defs><path d="M9.4 4.4 L20.8 12.2 L14 12.3 L10.3 18.6 Z" fill="url(#cg)" stroke="#3a5a3a" stroke-width="0.9" stroke-linejoin="round"/><path d="M121 13 v7 h-7z" fill="#000"/></svg><div class="t" style="left:263.70px;top:89.91px;font-size:10.5px;color:#f2f2f2;font-weight:normal;letter-spacing:0px;">Cursor</div><svg style="left:230px;top:100px" width="140" height="600"><path d="M63.2 17.6 h8.4 l-4.2 -7.3z" fill="#a0a0a0"/><path d="M63.5 576.5 h8 l-4 7z" fill="#505050"/></svg><div class="t" style="left:263.50px;top:130.01px;font-size:10.5px;color:#000;font-weight:normal;letter-spacing:0px;">Use Case</div><div class="t" style="left:263.50px;top:154.01px;font-size:10.5px;color:#000;font-weight:normal;letter-spacing:0px;">Association</div><div class="t" style="left:263.50px;top:178.01px;font-size:10.5px;color:#000;font-weight:normal;letter-spacing:0px;">Actor</div><div class="t" style="left:263.50px;top:202.01px;font-size:10.5px;color:#000;font-weight:normal;letter-spacing:0px;">System</div><div class="t" style="left:263.50px;top:226.01px;font-size:10.5px;color:#000;font-weight:normal;letter-spacing:0px;">Include</div><div class="t" style="left:263.50px;top:250.01px;font-size:10.5px;color:#000;font-weight:normal;letter-spacing:0px;">Extend</div><div class="t" style="left:263.50px;top:274.01px;font-size:10.5px;color:#000;font-weight:normal;letter-spacing:0px;">Dependency</div><div class="t" style="left:263.50px;top:298.01px;font-size:10.5px;color:#000;font-weight:normal;letter-spacing:0px;">Generalization</div><div class="t" style="left:263.50px;top:322.01px;font-size:10.5px;color:#000;font-weight:normal;letter-spacing:0px;">Collaboration</div><div class="t" style="left:263.50px;top:346.01px;font-size:10.5px;color:#000;font-weight:normal;letter-spacing:0px;">Element Group</div><div class="t" style="left:263.50px;top:370.01px;font-size:10.5px;color:#000;font-weight:normal;letter-spacing:0px;">Note</div><div class="t" style="left:263.50px;top:394.01px;font-size:10.5px;color:#000;font-weight:normal;letter-spacing:0px;">Anchor</div><div class="t" style="left:263.50px;top:418.01px;font-size:10.5px;color:#000;font-weight:normal;letter-spacing:0px;">Constraint</div><div class="t" style="left:263.50px;top:442.01px;font-size:10.5px;color:#000;font-weight:normal;letter-spacing:0px;">Containment</div><div class="t" style="left:263.50px;top:476.01px;font-size:10.5px;color:#000;font-weight:normal;letter-spacing:0px;">Allocate</div><div class="t" style="left:263.50px;top:500.01px;font-size:10.5px;color:#000;font-weight:normal;letter-spacing:0px;">Rationale</div><div class="t" style="left:263.50px;top:524.01px;font-size:10.5px;color:#000;font-weight:normal;letter-spacing:0px;">Problem</div><div class="t" style="left:263.50px;top:558.01px;font-size:10.5px;color:#000;font-weight:normal;letter-spacing:0px;">Package</div><div class="t" style="left:263.50px;top:582.01px;font-size:10.5px;color:#000;font-weight:normal;letter-spacing:0px;">Diagram Overview</div><div class="t" style="left:263.50px;top:606.01px;font-size:10.5px;color:#000;font-weight:normal;letter-spacing:0px;">ETL Table</div><div class="t" style="left:263.50px;top:630.01px;font-size:10.5px;color:#000;font-weight:normal;letter-spacing:0px;">Generic Connector</div><div class="t" style="left:263.50px;top:654.01px;font-size:10.5px;color:#000;font-weight:normal;letter-spacing:0px;">User Story</div><svg style="left:0;top:0" width="370" height="713"><defs><linearGradient id="gb" x1="0" y1="0" x2="0" y2="1"><stop offset="0" stop-color="#9fcbf3"/><stop offset="1" stop-color="#5a9be6"/></linearGradient><linearGradient id="gp" x1="0" y1="0" x2="1" y2="0"><stop offset="0" stop-color="#9cc6ee"/><stop offset="1" stop-color="#3c7bcc"/></linearGradient><linearGradient id="gs" x1="0" y1="0" x2="0" y2="1"><stop offset="0" stop-color="#d6e9fb"/><stop offset="1" stop-color="#8fc0ef"/></linearGradient><radialGradient id="gc" cx="0.4" cy="0.4" r="0.7"><stop offset="0" stop-color="#7fb4ea"/><stop offset="1" stop-color="#2f78cf"/></radialGradient></defs><defs><linearGradient id="uc" x1="0" y1="0" x2="1" y2="0"><stop offset="0" stop-color="#6aa6e4"/><stop offset="1" stop-color="#2a6cc4"/></linearGradient></defs><ellipse cx="250" cy="135.6" rx="7.9" ry="4.3" fill="url(#uc)" stroke="#2a66b4" stroke-width="0.8"/><path d="M241 159.6 h18" stroke="#7a7a7a" stroke-width="1.9"/><circle cx="250.5" cy="178.4" r="3.1" fill="#c4e4f8" stroke="#111" stroke-width="1"/><path d="M250.5 181.5 v6.3 M246.3 183.6 h7.4 M250.5 187.6 l-3.4 3 M250.5 187.6 l3.4 3" stroke="#111" stroke-width="1" fill="none"/><rect x="244.5" y="199.5" width="11" height="15" rx="1" fill="#a5cdf0" stroke="#3c78bf" stroke-width="1"/><path d="M246 202 h8" stroke="#3c78bf" stroke-width="1"/><path d="M242 234.5 h13" stroke="#222" stroke-width="1.1" stroke-dasharray="1.3 1.1"/><path d="M254.4 232.6 L257.8 234.5 L254.4 236.8" stroke="#222" fill="none" stroke-width="1"/><path d="M250.6 224.3 v7.4" stroke="#111" stroke-width="1.3"/><path d="M245 229 l-2.4 1.4 2.4 1.4 M247.6 229 l-2.4 1.4 2.4 1.4 M253.5 229 l2.4 1.4 -2.4 1.4 M256 229 l2.4 1.4 -2.4 1.4" stroke="#8a8a8a" stroke-width="0.8" fill="none"/><path d="M243 257.5 h13.5" stroke="#222" stroke-width="1.1" stroke-dasharray="1.3 1.1"/><path d="M245.7 255.5 L241.6 257.5 L245.7 260.1" stroke="#222" fill="none" stroke-width="1"/><text x="247.6" y="254.2" font-size="7" font-weight="bold" font-family="Liberation Sans" fill="#111">E</text><path d="M244.5 251.5 l-2.4 1.3 2.4 1.3 M247 251.5 l-2.4 1.3 2.4 1.3 M253 251.5 l2.4 1.3 -2.4 1.3 M255.6 251.5 l2.4 1.3 -2.4 1.3" stroke="#8a8a8a" stroke-width="0.8" fill="none"/><path d="M243 279.5 h13" stroke="#555" stroke-width="1.1" stroke-dasharray="1.6 1.2"/><path d="M252.5 275.1 L257.6 279.4 L252.5 283.6" stroke="#222" fill="none" stroke-width="1.1"/><path d="M248.6 303.5 h10.2" stroke="#111" stroke-width="1.2"/><path d="M248.6 299 L242.2 303.5 L248.6 308 Z" stroke="#111" fill="#fafafa" stroke-width="1.2"/><path d="M357 305 v7 h-7z" fill="#222"/><ellipse cx="250" cy="327" rx="7.6" ry="4.2" fill="url(#gc)" stroke="#3a7fd0" stroke-width="1.4" stroke-dasharray="1 0.9"/><path d="M241.5 344.5 H254 L257.5 348 V356.5 H241.5 Z" fill="url(#gb)" stroke="#1f5fb8" stroke-width="1"/><text x="245" y="353.8" font-size="7.5" font-weight="bold" font-family="Liberation Sans" fill="#22303f" letter-spacing="-0.3">EG</text><path d="M241.5 368.5 H254 L257.5 372 V380.5 H241.5 Z" fill="url(#gb)" stroke="#1f5fb8" stroke-width="1"/><path d="M244 371.5 h6 M244 373.5 h6 M244 375.5 h11 M244 377.5 h11" stroke="#3a4a5a" stroke-width="0.9"/><path d="M242 399.5 h17" stroke="#555" stroke-width="1" stroke-dasharray="1.6 1.2"/><path d="M241 426.5 h18" stroke="#333" stroke-width="1" stroke-dasharray="1.6 1.2"/><text x="244.3" y="424.3" font-size="10.5" font-family="Liberation Sans" fill="#111" letter-spacing="-0.3">{ }</text><circle cx="245.5" cy="447.5" r="3.5" fill="none" stroke="#222" stroke-width="1"/><path d="M242 447.5 h17 M245.5 444 v7" stroke="#222" stroke-width="1"/><path d="M242 464.5 h112" stroke="#c8c8c8" stroke-width="1.4"/><path d="M242 546.5 h112" stroke="#c8c8c8" stroke-width="1.4"/><path d="M242 484.5 h13" stroke="#222" stroke-width="1.1" stroke-dasharray="1.3 1.1"/><path d="M254.4 482.6 L257.8 484.5 L254.4 486.8" stroke="#222" fill="none" stroke-width="1"/><path d="M244.5 478 l-2.4 1.4 2.4 1.4 M247 478 l-2.4 1.4 2.4 1.4 M253.5 478 l2.4 1.4 -2.4 1.4 M256 478 l2.4 1.4 -2.4 1.4" stroke="#555" stroke-width="0.8" fill="none"/><text x="247.6" y="480.8" font-size="5" font-family="Liberation Sans" fill="#666">al</text><path d="M242.5 498.5 H254.5 L257.5 501.5 V510.5 H242.5 Z" fill="#3f8ee3" stroke="#1d63c0" stroke-width="1"/><path d="M247 501.5 L243.4 504.5 L247 507.5 M252.8 501.5 L256.6 504.5 L252.8 507.5" stroke="#000" stroke-width="1.2" fill="none"/><path d="M242.5 522.5 H254.5 L257.5 525.5 V534.5 H242.5 Z" fill="#3f8ee3" stroke="#1d63c0" stroke-width="1"/><path d="M247 525.5 L243.4 528.5 L247 531.5 M252.8 525.5 L256.6 528.5 L252.8 531.5" stroke="#000" stroke-width="1.2" fill="none"/><path d="M248.8 502.6 V508 M248.8 504.3 Q249.5 502.6 251.4 502.7" stroke="#000" stroke-width="1.2" fill="none"/><path d="M248.5 526.2 V533.6" stroke="#000" stroke-width="1.2"/><ellipse cx="250.4" cy="528.4" rx="1.8" ry="2.1" fill="none" stroke="#000" stroke-width="1.1"/><path d="M241.5 555.5 h5.5 v2.5 h11.5 v12.5 h-17z" fill="url(#gp)" stroke="#2f6ab0" stroke-width="1"/><path d="M245.5 561.5 h9.5" stroke="#1b2d46" stroke-width="1.2"/><path d="M357 565 v7 h-7z" fill="#222"/><rect x="241.5" y="580.5" width="16" height="12" fill="url(#gs)" stroke="#2a86e8" stroke-width="1.2"/><path d="M242 583 h6 l-2 2.5 h-4z" fill="#5aa0ea"/><rect x="244.5" y="587" width="5" height="3.5" fill="#dde8f2" stroke="#7d93aa" stroke-width="0.8"/><rect x="250.5" y="583" width="5" height="3.5" fill="#dde8f2" stroke="#7d93aa" stroke-width="0.8"/><path d="M252.5 586.5 v2 h-3" stroke="#7d93aa" stroke-width="0.8" fill="none"/><rect x="241.5" y="603.5" width="16" height="14" fill="#f0f0f0" stroke="#aaa" stroke-width="1"/><rect x="242" y="604" width="15" height="3.5" fill="#9ed07a"/><path d="M242 610.5 h15 M242 614 h15 M246.5 607.5 v10 M251.5 607.5 v10" stroke="#bbb" stroke-width="0.8"/><rect x="242" y="607.5" width="4" height="2.5" fill="#3a7fd0"/><path d="M250 617 l6 -6" stroke="#e0405a" stroke-width="1"/><path d="M241 635.6 h18" stroke="#7a7a7a" stroke-width="1.9"/><defs><linearGradient id="us" x1="0" y1="0" x2="1" y2="1"><stop offset="0" stop-color="#9ed2f0"/><stop offset="1" stop-color="#e6f5fc"/></linearGradient></defs><rect x="242.5" y="654.5" width="16" height="10" fill="url(#us)" stroke="#2a8fb8" stroke-width="1.2"/></svg><div class="a" style="left:360px;top:84px;width:887px;height:585px;background:#fff;border-left:1px solid #8a929b;border-top:1px solid #78808a;border-radius:0 0 6px 0"></div><svg style="left:0;top:0;will-change:transform" width="1266" height="713"><defs><clipPath id="cv"><rect x="361" y="85" width="885" height="584"/></clipPath></defs><g clip-path="url(#cv)" font-family="Liberation Sans" font-size="9" letter-spacing="0.4" fill="none" stroke="#000" stroke-width="1"><path d="M361 85.5 H566.5 V94 L562 102.5 H361" stroke-width="1"/><text x="363.7" y="97.7" fill="#000" stroke="none" font-size="9.5" letter-spacing="0.08">[Use Case Diagram for Online Food Delivery]</text><rect x="381.5" y="112.5" width="836" height="399" fill="#7acef4"/><text x="799" y="124" text-anchor="middle" fill="#000" stroke="none" font-weight="normal">Online Food Delivery</text><ellipse cx="785.75" cy="193.5" rx="43.25" ry="18.0" fill="#7acef4"/><text x="785.5" y="197.9" text-anchor="middle" fill="#000" stroke="none" font-weight="normal">Process Payment</text><ellipse cx="785.75" cy="274.0" rx="78.25" ry="25.5" fill="#7acef4"/><path d="M715.5 262.5 H855"/><text x="785.5" y="259.9" text-anchor="middle" fill="#000" stroke="none" font-weight="normal">Place Order</text><text x="783.5" y="277.2" text-anchor="middle" fill="#000" stroke="none" font-weight="bold">extension points</text><text x="787" y="290" text-anchor="middle" fill="#000" stroke="none" font-weight="normal">ExtensionPoint</text><ellipse cx="786.75" cy="355.75" rx="50.25" ry="18.25" fill="#7acef4"/><text x="786.5" y="360" text-anchor="middle" fill="#000" stroke="none" font-weight="normal">Update Order Status</text><ellipse cx="489.5" cy="274.5" rx="36.0" ry="18.0" fill="#7acef4"/><text x="489.5" y="278.6" text-anchor="middle" fill="#000" stroke="none" font-weight="normal">Cancel Order</text><ellipse cx="921.5" cy="409.5" rx="36.0" ry="18.0" fill="#7acef4"/><text x="921.3" y="414.2" text-anchor="middle" fill="#000" stroke="none" font-weight="normal">Rate Driver</text><ellipse cx="1082.75" cy="409.0" rx="78.25" ry="25.5" fill="#7acef4"/><path d="M1012 397.5 H1153"/><text x="1082.5" y="394.6" text-anchor="middle" fill="#000" stroke="none" font-weight="normal">Track Order</text><text x="1080.5" y="411.7" text-anchor="middle" fill="#000" stroke="none" font-weight="bold">extension points</text><text x="1084" y="424.7" text-anchor="middle" fill="#000" stroke="none" font-weight="normal">ExtensionPoint</text><ellipse cx="570.75" cy="463.5" rx="36.25" ry="18.0" fill="#7acef4"/><text x="570.5" y="467.5" text-anchor="middle" fill="#000" stroke="none" font-weight="normal">View Menu</text><ellipse cx="704.5" cy="463.5" rx="44.0" ry="18.0" fill="#7acef4"/><text x="704.5" y="467.5" text-anchor="middle" fill="#000" stroke="none" font-weight="normal">Manage Inventory</text><path d="M787.5 213 V248" stroke-dasharray="4 3"/><path d="M781.5 222.5 L787.5 212 L793 222.5"/><path d="M787.5 300 V337" stroke-dasharray="4 3"/><path d="M781.3 327 L787.5 337.5 L792.7 327"/><path d="M527 275.5 H706" stroke-dasharray="4 3"/><path d="M697 269.5 L707 275.5 L697 281"/><path d="M959 410.5 H1003" stroke-dasharray="4 3"/><path d="M994.5 415.8 L1004.5 410 L1001 408.2"/><text x="746.3" y="234.6" text-anchor="middle" fill="#000" stroke="none">&lt;&lt;Include&gt;&gt;</text><text x="746.4" y="323.9" text-anchor="middle" fill="#000" stroke="none">&lt;&lt;Include&gt;&gt;</text><text x="616.7" y="270.4" text-anchor="middle" fill="#000" stroke="none">&lt;&lt;Extend&gt;&gt;</text><text x="981.3" y="405.6" text-anchor="middle" fill="#000" stroke="none">&lt;&lt;Extend&gt;&gt;</text><path d="M864 275.5 H1250"/><path d="M490.5 293 V644.5 H1200"/><path d="M571.5 482 V617.5 H1220"/><path d="M706.5 482 V563.5 H775"/><path d="M787.5 374 V535"/><path d="M922.5 428 V563.5 H1072"/><path d="M1084.5 435 V535"/><path d="M1161 410.5 H1232.5 V583"/><circle cx="786.5" cy="542" r="7" fill="#7acef4"/><path d="M786.5 549 V572 M773.0 556.5 H801.0 M786.5 572 L773.0 590 M786.5 572 L801.0 590"/><text x="786.5" y="600.7" text-anchor="middle" fill="#000" stroke="none">Administrator</text><circle cx="1083.5" cy="542" r="7" fill="#7acef4"/><path d="M1083.5 549 V572 M1070.0 556.5 H1098.0 M1083.5 572 L1070.0 590 M1083.5 572 L1098.0 590"/><text x="1083.5" y="600.7" text-anchor="middle" fill="#000" stroke="none">Delivery Staff</text><circle cx="1231.5" cy="590" r="7" fill="#7acef4"/><path d="M1231.5 597 V620 M1218.0 604.5 H1246.0 M1231.5 620 L1218.0 638 M1231.5 620 L1246.0 638"/><text x="1211" y="648.7" fill="#000" stroke="none" letter-spacing="0.85">Customer</text></g></svg><div class="a" style="left:1247px;top:84px;width:17px;height:601px;background:#f0f0f0"></div><div class="a" style="left:361px;top:669px;width:903px;height:16px;background:#f0f0f0"></div><svg style="left:0;top:0" width="1266" height="713"><rect x="1246" y="84.5" width="16.5" height="4.5" fill="#fff"/><path d="M1246 89.3 H1262.6 V84" fill="none" stroke="#808080" stroke-width="1.4"/><path d="M1255 107 V646" stroke="#8a8a8a" stroke-width="2"/><path d="M398 677 H1194" stroke="#8a8a8a" stroke-width="2"/><path d="M361 685.5 H1264" stroke="#7d8791" stroke-width="1"/><rect x="360" y="668" width="4.5" height="16.5" fill="#fff"/><path d="M364.8 668 V684.6 H360" fill="none" stroke="#8a8a8a" stroke-width="1.4"/><path d="M1263.5 84 V686" stroke="#7d8791" stroke-width="1"/><rect x="1234.5" y="362.5" width="11" height="26" fill="#e2e2e2" stroke="#cfcfcf" stroke-width="1"/><path d="M1237.5 366 V385 M1240 366 V385 M1242.5 366 V385" stroke="#888" stroke-width="1"/><path d="M1255.5 669.5 L1262.5 677 L1255.5 684.5 L1248.5 677 Z" fill="#000"/><rect x="1252" y="673.5" width="3" height="3" fill="#fff"/><rect x="1256" y="673.5" width="3" height="3" fill="#fff"/><rect x="1252" y="677.5" width="3" height="3" fill="#fff"/><rect x="1256" y="677.5" width="3" height="3" fill="#fff"/></svg><div class="a" style="left:0;top:687px;width:1266px;height:26px;background:linear-gradient(#fbfbfb,#f1f1f1)"></div><svg style="left:1190px;top:686px" width="76" height="27"><rect x="5.5" y="8.5" width="17" height="11" fill="#eeeeee" stroke="#4a90e0" stroke-width="1"/><path d="M6 9.5 L14.3 14.5 L22 9.5" fill="none" stroke="#4a90e0" stroke-width="0.9" stroke-dasharray="1.4 0.6"/><path d="M40.5 4.5 H49.8 L54.8 9.5 V20.5 H40.5 Z" fill="#f2f4f6" stroke="#4a90e0" stroke-width="1"/><path d="M49.8 4.5 V9.5 H54.8" fill="#fff" stroke="#4a90e0" stroke-width="0.9"/><path d="M42 10.5 h10 M42 13 h10 M42 16 h10" stroke="#cfcfcf" stroke-width="1.2"/><path d="M45.5 19 L52.8 7.2" stroke="#1f8fb0" stroke-width="1.3"/><path d="M53 6.8 l0.8 -1.2" stroke="#e8a090" stroke-width="1" fill="none"/></svg><div class="a" style="left:0;top:0;width:1266px;height:713px;border:1px solid #aaaaaa;border-radius:8px;pointer-events:none;box-shadow:0 0 0 4px #f8f8f8"></div></body></html>
